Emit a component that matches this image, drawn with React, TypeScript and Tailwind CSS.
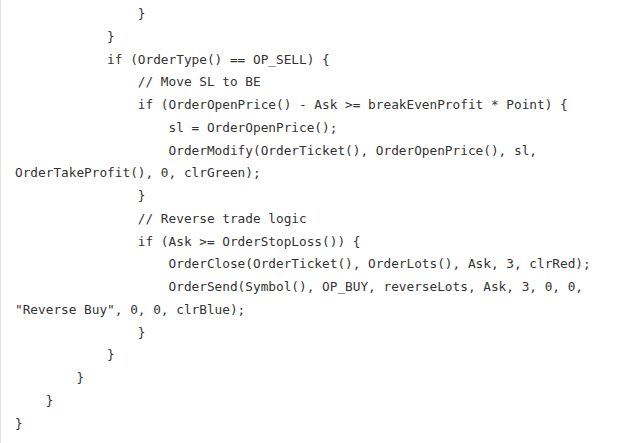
import React from "react";

const lines: string[] = [
  "                }",
  "            }",
  "            if (OrderType() == OP_SELL) {",
  "                // Move SL to BE",
  "                if (OrderOpenPrice() - Ask >= breakEvenProfit * Point) {",
  "                    sl = OrderOpenPrice();",
  "                    OrderModify(OrderTicket(), OrderOpenPrice(), sl,",
  "OrderTakeProfit(), 0, clrGreen);",
  "                }",
  "                // Reverse trade logic",
  "                if (Ask >= OrderStopLoss()) {",
  "                    OrderClose(OrderTicket(), OrderLots(), Ask, 3, clrRed);",
  "                    OrderSend(Symbol(), OP_BUY, reverseLots, Ask, 3, 0, 0,",
  "\"Reverse Buy\", 0, 0, clrBlue);",
  "                }",
  "            }",
  "        }",
  "    }",
  "}",
];

export default function App() {
  return (
    <div className="w-[625px] h-[443px] bg-white overflow-hidden">
      <div className="h-full border-l border-[#e3e3e3] pl-[14px] pt-[3px]">
        <pre
          className="m-0 text-[#333333] text-[12.75px] leading-[22.75px] whitespace-pre"
          style={{ fontFamily: '"DejaVu Sans Mono", "Liberation Mono", monospace' }}
        >
          {lines.map((l, i) => (
            <div key={i}>{l === "" ? "\u00a0" : l}</div>
          ))}
        </pre>
      </div>
    </div>
  );
}
